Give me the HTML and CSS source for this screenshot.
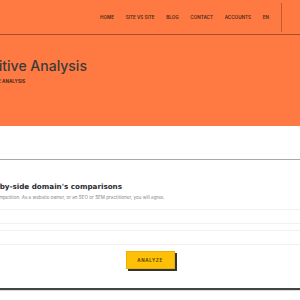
FILE: index.html
```html
<!DOCTYPE html>
<html lang="en">
<head>
  <meta charset="UTF-8">
  <meta name="viewport" content="width=device-width, initial-scale=1.0">
  <title>Competitive Analysis</title>
  <link rel="stylesheet" href="styles.css">
</head>
<body>

    <!-- Header Section -->
    <header class="header">
        <nav class="nav-bar">
            <a href="#">Home</a>
            <a href="#">Site vs Site</a>
            <a href="#">Blog</a>
            <a href="#">Contact</a>
            <a href="#">Accounts</a>
            <a href="#">EN</a>
        </nav>
        <div class="nav-divider"></div>
    </header>

    <!-- Page Title -->
    <section class="hero">
        <h1>Competitive Analysis</h1>
        <p class="crumb">Competitive Analysis</p>
    </section>

    <!-- Compare Form -->
    <section class="compare">
        <div class="compare-top"></div>
        <h2>Side-by-side domain's comparisons</h2>
        <p class="lead">Know your competition. As a website owner, or an SEO or SEM practitioner, you will agree.</p>
        <form class="compare-form">
            <input type="text" class="field">
            <input type="text" class="field">
            <button type="button" class="btn-analyze">Analyze</button>
        </form>
    </section>

    <footer class="footer"></footer>
</body>
</html>
```

FILE: styles.css
```css
/* Basic page styling */
body {
  font-family: Inter, "Noto Sans", sans-serif;
  margin: 0;
  padding: 0;
  background-color: #ffffff;
  color: #333333;
  overflow: hidden;
}

/* Header Styling */
.header {
  display: flex;
  justify-content: flex-end;
  align-items: center;
  height: 34px;
  background-color: #ff7a43;
  border-bottom: 1px solid #a3502c;
}

.nav-bar {
  display: flex;
  gap: 11.7px;
}

.nav-bar a {
  color: #4a2a1a;
  text-decoration: none;
  font-size: 4.6px;
  font-weight: 600;
  text-transform: uppercase;
}

.nav-divider {
  width: 1px;
  height: 29px;
  margin-left: 12px;
  margin-right: 18px;
  background-color: #c25a30;
}

/* Title Section */
.hero {
  background-color: #ff7a43;
  height: 91px;
  padding-top: 22px;
  box-sizing: border-box;
}

.hero h1 {
  margin: 0 0 0 -54px;
  font-size: 14px;
  font-weight: 500;
  line-height: 18px;
  color: #3a3a3a;
}

.crumb {
  margin: 4px 0 0 -31px;
  font-size: 4.6px;
  font-weight: 700;
  text-transform: uppercase;
  color: #4a2a1a;
}

/* Compare Section */
.compare-top {
  height: 33px;
  border-bottom: 1px solid #a8a8a8;
}

.compare h2 {
  margin: 22px 0 0 -21px;
  font-family: "DejaVu Sans", sans-serif;
  font-size: 7.2px;
  font-weight: bold;
  color: #2a2a33;
}

.lead {
  margin: 4px 0 0 -31px;
  font-size: 4.6px;
  color: #888888;
}

.compare-form {
  display: flex;
  flex-direction: column;
  align-items: center;
  margin-top: 9px;
}

.field {
  display: block;
  width: 100%;
  height: 15px;
  margin: 0 0 6px;
  box-sizing: border-box;
  border: 1px solid #f1f1f1;
  border-left: none;
  border-right: none;
  background-color: #ffffff;
}

.btn-analyze {
  margin-top: 0;
  width: 49px;
  height: 18px;
  border: 1px solid #e8b000;
  background-color: #ffc107;
  box-shadow: 2px 2px 0 #333333;
  font-family: Inter, sans-serif;
  font-size: 4.5px;
  font-weight: 700;
  letter-spacing: 0.6px;
  text-transform: uppercase;
  color: #5a4300;
  cursor: pointer;
}

.footer {
  margin-top: 19px;
  height: 2px;
  background-color: #444444;
  border-bottom: 1px solid #dddddd;
}
```
